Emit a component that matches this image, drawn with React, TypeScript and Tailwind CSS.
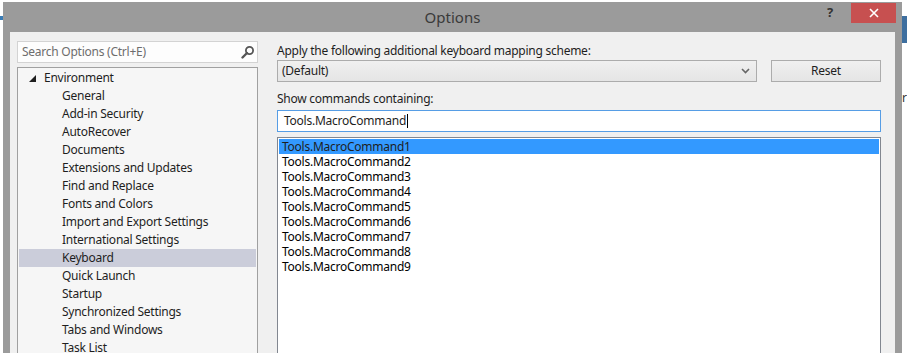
import React from 'react';

const font = { fontFamily: '"Noto Sans", "Open Sans", Arial, sans-serif' };

const envChildren = [
  'General',
  'Add-in Security',
  'AutoRecover',
  'Documents',
  'Extensions and Updates',
  'Find and Replace',
  'Fonts and Colors',
  'Import and Export Settings',
  'International Settings',
  'Keyboard',
  'Quick Launch',
  'Startup',
  'Synchronized Settings',
  'Tabs and Windows',
  'Task List',
];

const commands = [1, 2, 3, 4, 5, 6, 7, 8, 9].map((n) => `Tools.MacroCommand${n}`);

function SearchIcon() {
  return (
    <svg width="14" height="14" viewBox="0 0 14 14">
      <circle cx="8.5" cy="5.5" r="3.6" fill="none" stroke="#555" strokeWidth="1.8" />
      <path d="M6 8 L1.5 12.5" stroke="#555" strokeWidth="2.4" strokeLinecap="round" />
    </svg>
  );
}

function ExpandedArrow() {
  return (
    <svg width="7" height="7" viewBox="0 0 7 7">
      <polygon points="7,0 7,7 0,7" fill="#1e1e1e" />
    </svg>
  );
}

function Chevron() {
  return (
    <svg width="9" height="6" viewBox="0 0 9 6">
      <path d="M1 1 L4.5 4.5 L8 1" fill="none" stroke="#666" strokeWidth="1.6" />
    </svg>
  );
}

export default function App() {
  return (
    <div className="w-[907px] h-[353px] overflow-hidden bg-white flex" style={font}>
      {/* background window edge, left */}
      <div className="w-[3px] flex flex-col">
        <div className="h-[16px]" />
        <div className="h-[4px] bg-[#3a7cb5]" />
      </div>

      {/* Options dialog */}
      <div className="w-[899px] mt-[2px] bg-[#9b9b9b] flex flex-col">
        {/* title bar */}
        <div className="h-[30px] flex items-start">
          <div className="flex-1 h-[30px] flex items-center justify-center text-[15px] text-[#3a3a3a] pl-[80px]">
            Options
          </div>
          <div className="w-[16px] h-[20px] flex items-center justify-center text-[13px] font-bold text-[#333] mr-[13px] mt-[1px]">
            ?
          </div>
          <div className="w-[45px] h-[20px] mt-[1px] mr-[6px] bg-[#c75050] flex items-center justify-center">
            <svg width="10" height="10" viewBox="0 0 10 10">
              <path d="M1 1 L9 9 M9 1 L1 9" stroke="#fff" strokeWidth="1.6" />
            </svg>
          </div>
        </div>

        {/* client area */}
        <div className="flex-1 mx-[7px] bg-[#f0f0f0] flex pl-[7px] pr-[14px] pt-[9px] text-[12px] tracking-[-0.25px] text-[#1e1e1e]">
          {/* left: search + tree */}
          <div className="w-[241px] flex flex-col gap-[4px]">
            <div className="h-[22px] bg-[#fdfdfd] border border-[#d3d3d3] flex items-center pl-[4px] pr-[2px]">
              <span className="flex-1 text-[#6d6d6d] leading-none">Search Options (Ctrl+E)</span>
              <SearchIcon />
            </div>
            <div className="flex-1 bg-[#f6f6f6] border border-[#a0a0a0] px-[1px] pt-[1px]">
              <div className="h-[18px] flex items-center">
                <div className="w-[25px] flex justify-end pr-[8px]">
                  <ExpandedArrow />
                </div>
                <span>Environment</span>
              </div>
              {envChildren.map((item) => (
                <div
                  key={item}
                  className={
                    'h-[18px] leading-[18px] flex items-center pl-[43px] ' +
                    (item === 'Keyboard' ? 'bg-[#cbcdda]' : '')
                  }
                >
                  {item}
                </div>
              ))}
            </div>
          </div>

          {/* right: keyboard settings */}
          <div className="flex-1 ml-[19px] flex flex-col">
            <div className="h-[19px] flex items-center">Apply the following additional keyboard mapping scheme:</div>
            <div className="h-[22px] flex gap-[14px]">
              <div className="w-[480px] h-[22px] border border-[#acacac] bg-gradient-to-b from-[#f0f0f0] to-[#e5e5e5] flex items-center pl-[4px] pr-[6px]">
                <span className="flex-1">(Default)</span>
                <Chevron />
              </div>
              <div className="w-[110px] h-[22px] border border-[#acacac] bg-gradient-to-b from-[#f0f0f0] to-[#e5e5e5] flex items-center justify-center">
                Reset
              </div>
            </div>
            <div className="h-[28px] flex items-end pb-[2px]">Show commands containing:</div>
            <div className="h-[22px] bg-white border border-[#569de5] flex items-center pl-[6px]">
              <span>Tools.MacroCommand</span>
              <span className="w-[1px] h-[14px] bg-black ml-[1px]" />
            </div>
            <div className="flex-1 mt-[5px] bg-white border border-[#828790] p-[1px]">
              {commands.map((c, i) => (
                <div
                  key={c}
                  className={
                    'h-[15px] leading-[15px] flex items-center pl-[3px] ' +
                    (i === 0 ? 'bg-[#3399ff] text-[#1e1e1e]' : 'text-black')
                  }
                >
                  {c}
                </div>
              ))}
            </div>
          </div>
        </div>
      </div>

      {/* background window edge, right */}
      <div className="flex-1 flex flex-col">
        <div className="h-[16px]" />
        <div className="h-[27px] bg-[#3e6f9f]" />
        <div className="h-[64px] text-[12px] text-[#333] flex items-end">r</div>
      </div>
    </div>
  );
}
